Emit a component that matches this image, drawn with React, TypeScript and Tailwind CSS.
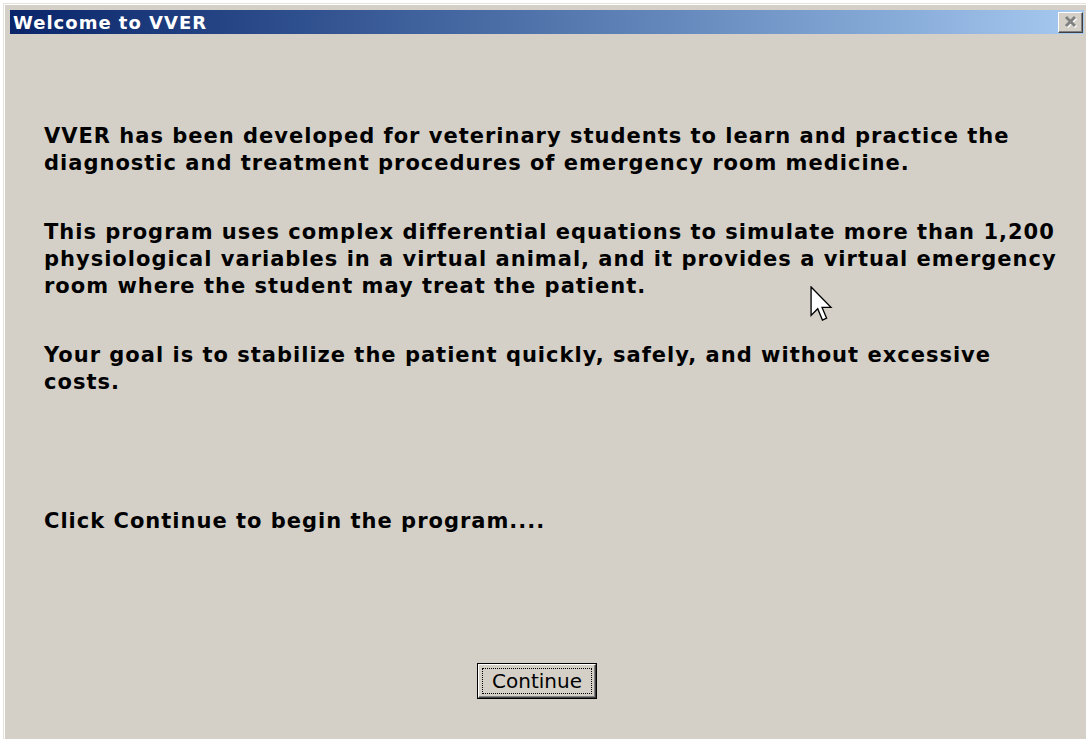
import React from 'react';

const bodyFont = { fontFamily: '"DejaVu Sans", "Liberation Sans", sans-serif' };

function CloseButton() {
  return (
    <div className="w-[25px] h-[21px] bg-[#d4d0c8] border border-t-white border-l-white border-r-[#404040] border-b-[#404040] flex items-center justify-center shadow-[inset_-1px_-1px_0_#808080]">
      <svg width="16" height="14" viewBox="0 0 16 14">
        <path d="M3 2 L12 11 M12 2 L3 11" stroke="#ffffff" strokeWidth="3" transform="translate(1 1)" />
        <path d="M3 2 L12 11 M12 2 L3 11" stroke="#808080" strokeWidth="3" />
      </svg>
    </div>
  );
}

function Pointer() {
  // standard arrow cursor, drawn at ~1.7x
  return (
    <svg className="absolute left-[810px] top-[286px]" width="23" height="36" viewBox="0 0 12 19">
      <path
        d="M0.5 0.5 L0.5 15.5 L4 12 L6.5 18 L8.7 17 L6.3 11.3 L11 11.3 Z"
        fill="#ffffff"
        stroke="#000000"
        strokeWidth="0.7"
        strokeLinejoin="miter"
      />
    </svg>
  );
}

export default function App() {
  return (
    <div className="relative w-[1086px] h-[739px] overflow-hidden bg-white pl-[3px] pt-[3px]">
      <div className="h-[760px] w-[1100px] border-l border-t border-[#e4e2dc] bg-[#d4d0c8]">
        <div className="h-full border-l border-t border-white bg-[#d4d0c8] pl-[5px] pt-[5px]">
          {/* title bar */}
          <div className="flex h-[24px] w-[1074px] items-center justify-between bg-gradient-to-r from-[#0a246a] to-[#a6caf0] pl-[3px] pr-[1px]">
            <span
              className="text-[18px] font-bold tracking-[1px] text-white"
              style={{ fontFamily: '"DejaVu Sans", Tahoma, sans-serif' }}
            >
              Welcome to VVER
            </span>
            <CloseButton />
          </div>

          {/* body */}
          <div className="pl-[34px] pt-[89px] text-[21px] font-bold leading-[27px] tracking-[1px] text-black" style={bodyFont}>
            <p>
              VVER has been developed for veterinary students to learn and practice the
              <br />
              diagnostic and treatment procedures of emergency room medicine.
            </p>
            <p className="mt-[42px]">
              This program uses complex differential equations to simulate more than 1,200
              <br />
              physiological variables in a virtual animal, and it provides a virtual emergency
              <br />
              room where the student may treat the patient.
            </p>
            <p className="mt-[42px]">
              Your goal is to stabilize the patient quickly, safely, and without excessive
              <br />
              costs.
            </p>
            <p className="mt-[112px]">Click Continue to begin the program....</p>
          </div>

          <div className="flex w-[1074px] pl-[467px] pt-[128px]">
            <button className="h-[36px] w-[120px] border border-black bg-[#d4d0c8] p-0" style={bodyFont}>
              <div className="h-full w-full border border-t-white border-l-white border-r-[#404040] border-b-[#404040] shadow-[inset_-1px_-1px_0_#808080] p-[3px]">
                <div className="flex h-full w-full items-center justify-center border border-dotted border-black text-[20px] text-black">
                  Continue
                </div>
              </div>
            </button>
          </div>
        </div>
      </div>
      <Pointer />
    </div>
  );
}
